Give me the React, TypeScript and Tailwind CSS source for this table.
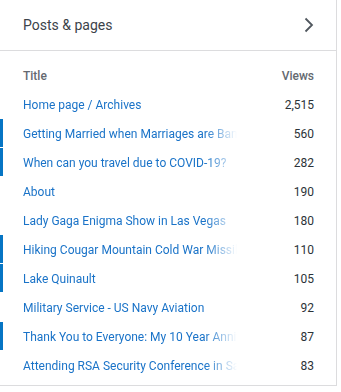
import React from "react";

const rows: { title: string; views: string; bar?: boolean }[] = [
  { title: "Home page / Archives", views: "2,515" },
  { title: "Getting Married when Marriages are Banned", views: "560", bar: true },
  { title: "When can you travel due to COVID-19?", views: "282", bar: true },
  { title: "About", views: "190" },
  { title: "Lady Gaga Enigma Show in Las Vegas", views: "180" },
  { title: "Hiking Cougar Mountain Cold War Missile Site", views: "110", bar: true },
  { title: "Lake Quinault", views: "105", bar: true },
  { title: "Military Service - US Navy Aviation", views: "92" },
  { title: "Thank You to Everyone: My 10 Year Anniversary", views: "87", bar: true },
  { title: "Attending RSA Security Conference in San Francisco", views: "83" },
];

export default function App() {
  return (
    <div
      className="w-[341px] h-[392px] bg-white overflow-hidden"
      style={{ fontFamily: 'Roboto, "Noto Sans", sans-serif' }}
    >
      <div className="w-[337px] h-[386px] border-r border-b border-[#dcdcde]">
        <div className="h-[51px] flex items-center justify-between pl-[23px] pr-[22px] border-b border-[#dcdcde]">
          <span className="text-[14px] text-[#3c434a]">Posts &amp; pages</span>
          <svg width="10" height="16" viewBox="0 0 10 16" fill="none">
            <path d="M1.5 1.5 L8 8 L1.5 14.5" stroke="#50575e" strokeWidth="1.8" />
          </svg>
        </div>
        <div className="pt-[13px]">
          <div className="h-[24px] flex items-center justify-between pl-[23px] pr-[22px] text-[12px] text-[#646970] font-medium">
            <span>Title</span>
            <span>Views</span>
          </div>
          <div className="pt-[2px]">
            {rows.map((r) => (
              <div key={r.title} className="relative h-[29px] flex items-center pl-[23px] pr-[22px]">
                {r.bar && <div className="absolute left-0 top-0 w-[3px] h-[28px] bg-[#0675c4]" />}
                <div
                  className="w-[214px] whitespace-nowrap overflow-hidden text-[12px] text-[#1a73c8]"
                  style={{
                    maskImage: "linear-gradient(to right, black 85%, transparent 100%)",
                    WebkitMaskImage: "linear-gradient(to right, black 85%, transparent 100%)",
                  }}
                >
                  {r.title}
                </div>
                <div className="flex-1 text-right text-[12px] text-[#2c3338]">{r.views}</div>
              </div>
            ))}
          </div>
        </div>
      </div>
    </div>
  );
}
